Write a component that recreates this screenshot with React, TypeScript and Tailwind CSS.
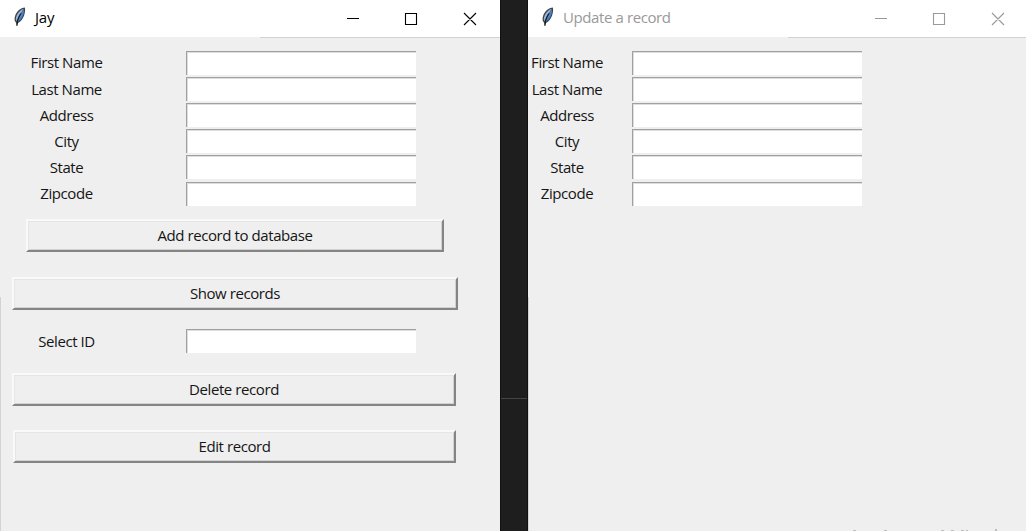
import React from 'react';

const FIELDS = ['First Name', 'Last Name', 'Address', 'City', 'State', 'Zipcode'];

function Feather() {
  return (
    <svg width="13" height="20" viewBox="0 0 13 20" className="shrink-0">
      <path d="M11.8 0.6C7.9 0.8 3.6 4.4 2 9.2C1.2 11.8 1.5 14.3 3 15.6L3.9 19.2L5 16C7.9 14.8 9.8 12 11 8.8C12 6 12.5 2.6 11.8 0.6Z" fill="#3c454e" />
      <path d="M10.8 1.8C7.6 2.7 4.4 6 3.3 9.6C2.7 11.6 2.7 13 3.3 14.4L6.4 8.2Z" fill="#9db4cb" />
      <path d="M11.1 2.4C11 7.2 9 11.9 5 14.5L4.9 10.9L7 7Z" fill="#4a86cc" />
      <path d="M8.2 6.4L6.4 9L4.4 14L3.9 18.8" stroke="#121b26" strokeWidth="1.1" fill="none" />
    </svg>
  );
}

function Controls() {
  return (
    <svg width="130" height="14" viewBox="0 0 130 14" fill="none" stroke="currentColor" className="ml-auto">
      <path d="M0 6.5H12M58.5 1.5H69.5V12.5H58.5ZM117 1L129 13M129 1L117 13" strokeWidth="1.1" />
    </svg>
  );
}

function TitleBar({ title, active }: { title: string; active?: boolean }) {
  return (
    <header className="flex h-[38px] flex-col bg-white">
      <div className={'flex h-[37px] items-center pl-[13px] ' + (active ? 'pr-[23px] text-black' : 'pr-[21px] text-[#999]')}>
        <div className="-mt-[3px] h-5"><Feather /></div>
        <h1 className={"ml-[9px] -mt-[3px] whitespace-nowrap font-['Open_Sans'] text-[15px] leading-5 " + (active ? 'tracking-[-0.2px]' : 'tracking-[-0.4px]')}>{title}</h1>
        <Controls />
      </div>
      <div className="flex h-px bg-[#efefef]">
        <div className="w-[260px]" />
        <div className="flex-1 bg-[#d3d3d3]" />
      </div>
    </header>
  );
}

function Entry({ label }: { label: string }) {
  return (
    <input
      aria-label={label}
      className="block h-[24px] w-[230px] border-l border-t border-[#a0a0a0] bg-white shadow-[inset_1px_1px_0_#dedede] outline-none"
    />
  );
}

function Row({ label, right }: { label: string; right?: boolean }) {
  return (
    <div className="flex h-[26.2px] items-start">
      <label className={'shrink-0 whitespace-nowrap pt-[1.9px] text-center ' + (right ? 'mr-[26px] w-[78px]' : 'mr-[53px] w-[133px]')}>{label}</label>
      <Entry label={label} />
    </div>
  );
}

function Button({ children, className }: { children: string; className: string }) {
  return (
    <button
      className={'block h-[33px] border-2 border-b-[#858585] border-l-[#f9f9f9] border-r-[#858585] border-t-[#f9f9f9] bg-[#efefef] pb-px text-center shadow-[inset_1px_1px_0_#e5e5e5,inset_-1px_-1px_0_#d2d2d2] ' + className}
    >
      {children}
    </button>
  );
}

export default function App() {
  return (
    <div className="flex h-[531px] w-[1026px] overflow-hidden bg-[#1e1e1e] font-['Open_Sans',sans-serif] text-[15px] leading-5 tracking-[-0.42px] text-[#151515]">
      <section className="flex w-[500px] flex-col bg-[#efefef]">
        <TitleBar title="Jay" active />
        <main className="relative flex-1 pt-[12.6px]">
          <div className="absolute bottom-0 left-0 top-[259px] w-px bg-[#d3d3d3]" />
          {FIELDS.map((f) => <Row key={f} label={f} />)}
          <Button className="ml-[26px] mt-[11.2px] w-[418px]">Add record to database</Button>
          <Button className="ml-[12px] mt-[25px] w-[446px]">Show records</Button>
          <div className="mt-[19px]"><Row label="Select ID" /></div>
          <Button className="ml-[12px] mt-[17.8px] w-[444px]">Delete record</Button>
          <Button className="ml-[13px] mt-[24.6px] w-[443px]">Edit record</Button>
        </main>
      </section>
      <div className="flex w-7 flex-col border-x border-[#111] bg-[#1e1e1e]">
        <div className="h-[398px]" />
        <div className="h-px bg-[#444]" />
      </div>
      <section className="flex w-[498px] flex-col bg-[#efefef]">
        <TitleBar title="Update a record" />
        <main className="relative flex-1 pt-[12.6px]">
          <div className="absolute -bottom-[2px] left-0 top-[259px] w-px bg-[#d3d3d3]" />
          {FIELDS.map((f) => <Row key={f} label={f} right />)}
        </main>
        <svg width="498" height="2" viewBox="0 0 498 2" className="shrink-0" fill="#bdbdbd">
          <path d="M325 1h3v1h-3zM356 1h3v1h-3zM413 1h3v1h-3zM423 1h3v1h-3zM433 1h3v1h-3zM438 1h2v1h-2zM467 0h2v2h-2z" />
        </svg>
      </section>
    </div>
  );
}
